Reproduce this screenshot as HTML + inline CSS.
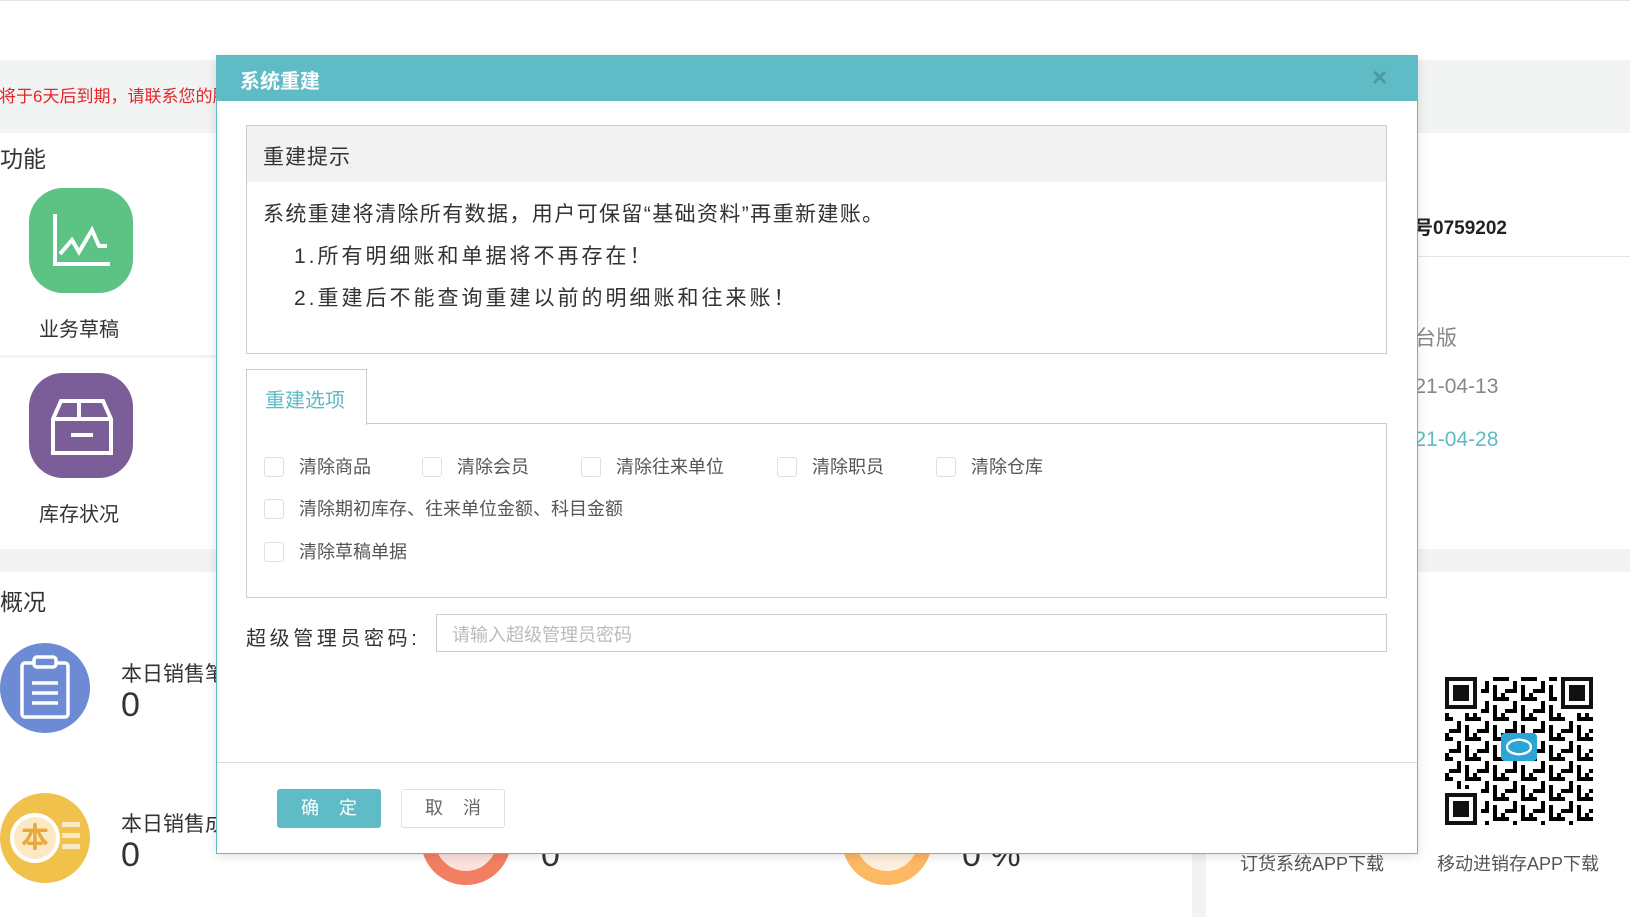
<!DOCTYPE html>
<html><head><meta charset="utf-8"><style>
*{margin:0;padding:0;box-sizing:border-box}
body{width:1630px;height:917px;overflow:hidden;background:#fff;position:relative;font-family:"Liberation Sans","Noto Sans CJK SC",sans-serif;color:#333}
.a{position:absolute;white-space:nowrap}
.cb{position:absolute;width:20px;height:20px;border:1px solid #dcdfe6;border-radius:3px;background:#fff}
.lb{position:absolute;font-size:18px;color:#555;white-space:nowrap;line-height:20px}
</style></head><body>
<div class="a" style="left:0;top:0;width:1630px;height:1px;background:#e5e5e5"></div>
<div class="a" style="left:0;top:60px;width:1630px;height:73px;background:#f2f3f3"></div>
<div class="a" style="left:-18px;top:82px;font-size:17px;color:#e4262b">您将于6天后到期，请联系您的服务商</div>
<div class="a" style="left:0;top:140px;font-size:23px;color:#333">功能</div>
<div class="a" style="left:29px;top:188px;width:104px;height:105px;border-radius:34px;background:#5cc385"></div>
<svg class="a" style="left:52px;top:212px" width="60" height="60" viewBox="0 0 60 60"><path d="M3 2V52H58" fill="none" stroke="#fff" stroke-width="4"/><path d="M8 42L20 28L27 40L40 18L47 34H55" fill="none" stroke="#fff" stroke-width="4"/></svg>
<div class="a" style="left:39px;top:313px;font-size:20px">业务草稿</div>
<div class="a" style="left:0;top:355px;width:216px;height:3px;background:#f4f4f4"></div>
<div class="a" style="left:29px;top:373px;width:104px;height:105px;border-radius:34px;background:#7b5e98"></div>
<svg class="a" style="left:49px;top:397px" width="66" height="60" viewBox="0 0 66 60"><path d="M4 22L12 4H54L62 22V56H4Z" fill="none" stroke="#fff" stroke-width="4"/><path d="M4 22H62M30 4V22M22 38H44" stroke="#fff" stroke-width="4"/></svg>
<div class="a" style="left:39px;top:498px;font-size:20px">库存状况</div>
<div class="a" style="left:0;top:355px;width:0;height:0"></div>
<div class="a" style="left:0;top:549px;width:1630px;height:23px;background:#f2f3f3"></div>
<div class="a" style="left:0;top:583px;font-size:23px">概况</div>
<div class="a" style="left:0;top:643px;width:90px;height:90px;border-radius:50%;background:#6c8bd4"></div>
<svg class="a" style="left:14px;top:655px" width="60" height="66" viewBox="0 0 60 66"><rect x="8" y="8" width="46" height="54" rx="3" fill="none" stroke="#fff" stroke-width="3.5"/><rect x="20" y="2" width="22" height="10" rx="3" fill="#6c8bd4" stroke="#fff" stroke-width="3.5"/><path d="M18 28H44M18 38H44M18 48H44" stroke="#fff" stroke-width="3.5"/></svg>
<div class="a" style="left:121px;top:658px;font-size:21px">本日销售笔数</div>
<div class="a" style="left:121px;top:686px;font-size:34px">0</div>
<div class="a" style="left:0;top:793px;width:90px;height:90px;border-radius:50%;background:#f0c14b"></div>
<div class="a" style="left:10px;top:813px;width:50px;height:50px;border-radius:50%;background:#fbe9c3;border:4px solid #fff;color:#e8a83a;font-size:28px;text-align:center;line-height:42px;font-weight:bold">本</div>
<div class="a" style="left:62px;top:822px;width:18px;height:5px;background:#fbe9c3;box-shadow:0 11px 0 #fbe9c3,0 22px 0 #fbe9c3"></div>
<div class="a" style="left:121px;top:808px;font-size:21px">本日销售成本</div>
<div class="a" style="left:121px;top:836px;font-size:34px">0</div>
<div class="a" style="left:421px;top:795px;width:90px;height:90px;border-radius:50%;border:14px solid #f37f62;background:#fbe2dc"></div>
<div class="a" style="left:541px;top:836px;font-size:34px">0</div>
<div class="a" style="left:842px;top:795px;width:90px;height:90px;border-radius:50%;border:14px solid #fdb863;background:#fdefdb"></div>
<div class="a" style="left:962px;top:836px;font-size:34px">0 %</div>
<div class="a" style="left:1395px;top:213px;font-size:19px;font-weight:bold;color:#222">帐号0759202</div>
<div class="a" style="left:1380px;top:256px;width:250px;height:1px;background:#e5e5e5"></div>
<div class="a" style="left:1394px;top:322px;font-size:21px;color:#888">平台版</div>
<div class="a" style="left:1391px;top:375px;font-size:21px;color:#888">2021-04-13</div>
<div class="a" style="left:1391px;top:428px;font-size:21px;color:#5fbbc5">2021-04-28</div>
<div class="a" style="left:1192px;top:854px;width:14px;height:63px;background:#f2f3f3"></div>
<svg class="a" style="left:1445px;top:677px" width="148" height="148" viewBox="0 0 37 37" shape-rendering="crispEdges">
<defs><pattern id="q" width="7" height="5" patternUnits="userSpaceOnUse"><rect x="0" y="0" width="2" height="1"/><rect x="3" y="1" width="1" height="2"/><rect x="5" y="0" width="2" height="1"/><rect x="1" y="3" width="3" height="1"/><rect x="5" y="2" width="1" height="3"/><rect x="0" y="4" width="1" height="1"/></pattern></defs>
<rect width="37" height="37" fill="url(#q)"/>
<rect x="0" y="0" width="9" height="9" fill="#fff"/><rect x="28" y="0" width="9" height="9" fill="#fff"/><rect x="0" y="28" width="9" height="9" fill="#fff"/>
<path d="M0 0h8v8h-8zM29 0h8v8h-8zM0 29h8v8h-8z" fill="#111"/><path d="M1 1h6v6h-6zM30 1h6v6h-6zM1 30h6v6h-6z" fill="#fff"/><path d="M2 2h4v4h-4zM31 2h4v4h-4zM2 31h4v4h-4z" fill="#111"/>
<rect x="14" y="14" width="9" height="7" rx="1" fill="#2aa5d4"/><ellipse cx="18.5" cy="17.5" rx="3" ry="1.8" fill="none" stroke="#fff" stroke-width=".6"/>
</svg>
<div class="a" style="left:1240px;top:850px;font-size:18px;color:#555">订货系统APP下载</div>
<div class="a" style="left:1437px;top:850px;font-size:18px;color:#555">移动进销存APP下载</div>

<!-- modal -->
<div class="a" style="left:216px;top:55px;width:1202px;height:799px;background:#fff;border:1px solid #5fbbc5;box-shadow:0 2px 10px rgba(0,0,0,.12)"></div>
<div class="a" style="left:216px;top:55px;width:1201px;height:46px;background:#5fbbc5"></div>
<div class="a" style="left:240px;top:65px;font-size:20px;font-weight:bold;color:#fff">系统重建</div>
<div class="a" style="left:1372px;top:62px;font-size:26px;font-weight:bold;color:#4a9aa3">×</div>
<div class="a" style="left:246px;top:125px;width:1141px;height:229px;border:1px solid #ccc"></div>
<div class="a" style="left:247px;top:126px;width:1139px;height:56px;background:#f2f2f2"></div>
<div class="a" style="left:263px;top:141px;font-size:21px;letter-spacing:1px">重建提示</div>
<div class="a" style="left:263px;top:198px;font-size:21px;letter-spacing:1.4px">系统重建将清除所有数据，用户可保留“基础资料”再重新建账。</div>
<div class="a" style="left:294px;top:240px;font-size:21px;letter-spacing:3px">1.所有明细账和单据将不再存在！</div>
<div class="a" style="left:294px;top:282px;font-size:21px;letter-spacing:3px">2.重建后不能查询重建以前的明细账和往来账！</div>
<div class="a" style="left:246px;top:423px;width:1141px;height:175px;border:1px solid #ccc"></div>
<div class="a" style="left:246px;top:369px;width:121px;height:56px;border:1px solid #ccc;border-bottom:none;background:#fff"></div>
<div class="a" style="left:265px;top:384px;font-size:20px;color:#5fbbc5">重建选项</div>
<div class="cb" style="left:264px;top:457px"></div><div class="lb" style="left:299px;top:457px">清除商品</div>
<div class="cb" style="left:422px;top:457px"></div><div class="lb" style="left:457px;top:457px">清除会员</div>
<div class="cb" style="left:581px;top:457px"></div><div class="lb" style="left:616px;top:457px">清除往来单位</div>
<div class="cb" style="left:777px;top:457px"></div><div class="lb" style="left:812px;top:457px">清除职员</div>
<div class="cb" style="left:936px;top:457px"></div><div class="lb" style="left:971px;top:457px">清除仓库</div>
<div class="cb" style="left:264px;top:499px"></div><div class="lb" style="left:299px;top:499px">清除期初库存、往来单位金额、科目金额</div>
<div class="cb" style="left:264px;top:542px"></div><div class="lb" style="left:299px;top:542px">清除草稿单据</div>
<div class="a" style="left:246px;top:622px;font-size:20px;letter-spacing:3.6px">超级管理员密码:</div>
<div class="a" style="left:436px;top:614px;width:951px;height:38px;border:1px solid #ccc"></div>
<div class="a" style="left:452px;top:621px;font-size:18px;color:#bbb">请输入超级管理员密码</div>
<div class="a" style="left:217px;top:762px;width:1200px;height:1px;background:#ddd"></div>
<div class="a" style="left:277px;top:789px;width:104px;height:39px;border-radius:3px;background:#5fbbc5;color:#fff;font-size:18px;text-align:center;line-height:39px;letter-spacing:20px;padding-left:20px">确定</div>
<div class="a" style="left:401px;top:789px;width:104px;height:39px;border-radius:3px;border:1px solid #dcdfe6;color:#666;font-size:18px;text-align:center;line-height:37px;letter-spacing:20px;padding-left:20px">取消</div>
</body></html>
